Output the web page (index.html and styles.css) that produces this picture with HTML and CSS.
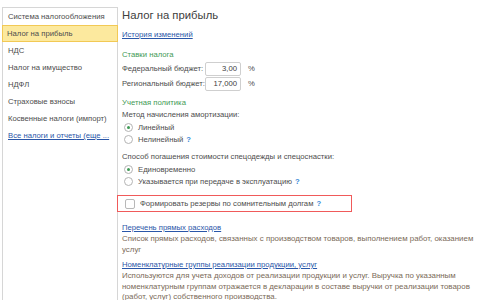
FILE: index.html
```html
<!DOCTYPE html>
<html lang="ru">
<head>
    <meta charset="UTF-8">
    <title>Налоги и отчеты</title>
    <link rel="stylesheet" href="styles.css">
</head>
<body>
    <div class="page">
        <div class="nav">
            <div class="nav-item">Система налогообложения</div>
            <div class="nav-item active">Налог на прибыль</div>
            <div class="nav-item">НДС</div>
            <div class="nav-item">Налог на имущество</div>
            <div class="nav-item">НДФЛ</div>
            <div class="nav-item">Страховые взносы</div>
            <div class="nav-item">Косвенные налоги (импорт)</div>
            <div class="nav-item"><a href="#" class="link">Все налоги и отчеты (еще ...</a></div>
        </div>

        <div class="main">
            <div class="title">Налог на прибыль</div>
            <div class="row history"><a href="#" class="link">История изменений</a></div>

            <div class="group-title first">Ставки налога</div>
            <div class="field">
                <span class="field-label">Федеральный бюджет:</span>
                <span class="input">3,00</span>
                <span class="unit">%</span>
            </div>
            <div class="field">
                <span class="field-label">Региональный бюджет:</span>
                <span class="input">17,000</span>
                <span class="unit">%</span>
            </div>

            <div class="group-title">Учетная политика</div>
            <div class="row">Метод начисления амортизации:</div>
            <div class="option"><span class="radio checked"></span>Линейный</div>
            <div class="option"><span class="radio"></span>Нелинейный <span class="help">?</span></div>

            <div class="row gap">Способ погашения стоимости спецодежды и спецоснастки:</div>
            <div class="option"><span class="radio checked"></span>Единовременно</div>
            <div class="option"><span class="radio"></span>Указывается при передаче в эксплуатацию <span class="help">?</span></div>

            <div class="option marked"><span class="checkbox"></span>Формировать резервы по сомнительным долгам <span class="help">?</span></div>

            <div class="row list-link"><a href="#" class="link">Перечень прямых расходов</a></div>
            <div class="note">Список прямых расходов, связанных с производством товаров, выполнением работ, оказанием услуг</div>

            <div class="row next-link"><a href="#" class="link">Номенклатурные группы реализации продукции, услуг</a></div>
            <div class="note">Используются для учета доходов от реализации продукции и услуг. Выручка по указанным номенклатурным группам отражается в декларации в составе выручки от реализации товаров (работ, услуг) собственного производства.</div>
        </div>
    </div>
</body>
</html>
```

FILE: styles.css
```css
* { box-sizing: border-box; }
body { margin: 0; background: #fff; font-family: "Liberation Sans", Arial, sans-serif; font-size: 7.7px; color: #4d4d4d; overflow: hidden; }
.page { display: flex; align-items: stretch; height: 300px; }

.nav { width: 116px; margin: 7px 0 0 2px; border: 1px solid #d6d6d6; border-bottom: none; }
.nav-item { height: 17px; line-height: 17px; padding-left: 5px; white-space: nowrap; overflow: hidden; color: #4d4d4d; }
.nav-item.active { background: #fce99e; border: 1px solid #f2c955; line-height: 15px; padding-left: 4px; margin: 0 -1px; }

.main { flex: 1; padding: 6px 0 0 4px; }
.title { height: 18px; line-height: 18px; font-size: 11.3px; color: #404040; }
.row { height: 12px; line-height: 12px; white-space: nowrap; }
.history { margin-top: 5px; }
.link { color: #2a56a8; text-decoration: underline; }

.group-title { height: 12px; line-height: 12px; color: #3f9a55; margin-top: 6px; }
.group-title.first { margin-top: 8px; }

.field { display: flex; align-items: center; height: 15px; }
.field-label { width: 83px; }
.input { width: 36px; height: 14px; line-height: 12px; border: 1px solid #cfcfcf; border-radius: 2px; text-align: right; padding-right: 3px; color: #404040; }
.unit { margin-left: 7px; }

.option { display: flex; align-items: center; height: 12px; padding-left: 2px; white-space: nowrap; }
.radio { width: 9px; height: 9px; border: 1px solid #b4b4b4; border-radius: 50%; margin-right: 5px; display: flex; align-items: center; justify-content: center; }
.radio.checked::after { content: ""; width: 3px; height: 3px; border-radius: 50%; background: #3f9a55; }
.help { color: #3a8ad6; font-weight: bold; margin-left: 3px; }
.gap { margin-top: 6px; }

.marked { height: 17px; margin: 8px 0 0 -5px; padding-left: 7px; width: 235px; border: 1px solid rgb(240, 90, 90); }
.checkbox { width: 10px; height: 10px; border: 1px solid #b8b8b8; border-radius: 2px; margin-right: 5px; }

.list-link { margin-top: 10px; }
.next-link { margin-top: 4px; }
.note { font-size: 7.9px; line-height: 10.5px; color: #7a6a58; width: 355px; }
```
